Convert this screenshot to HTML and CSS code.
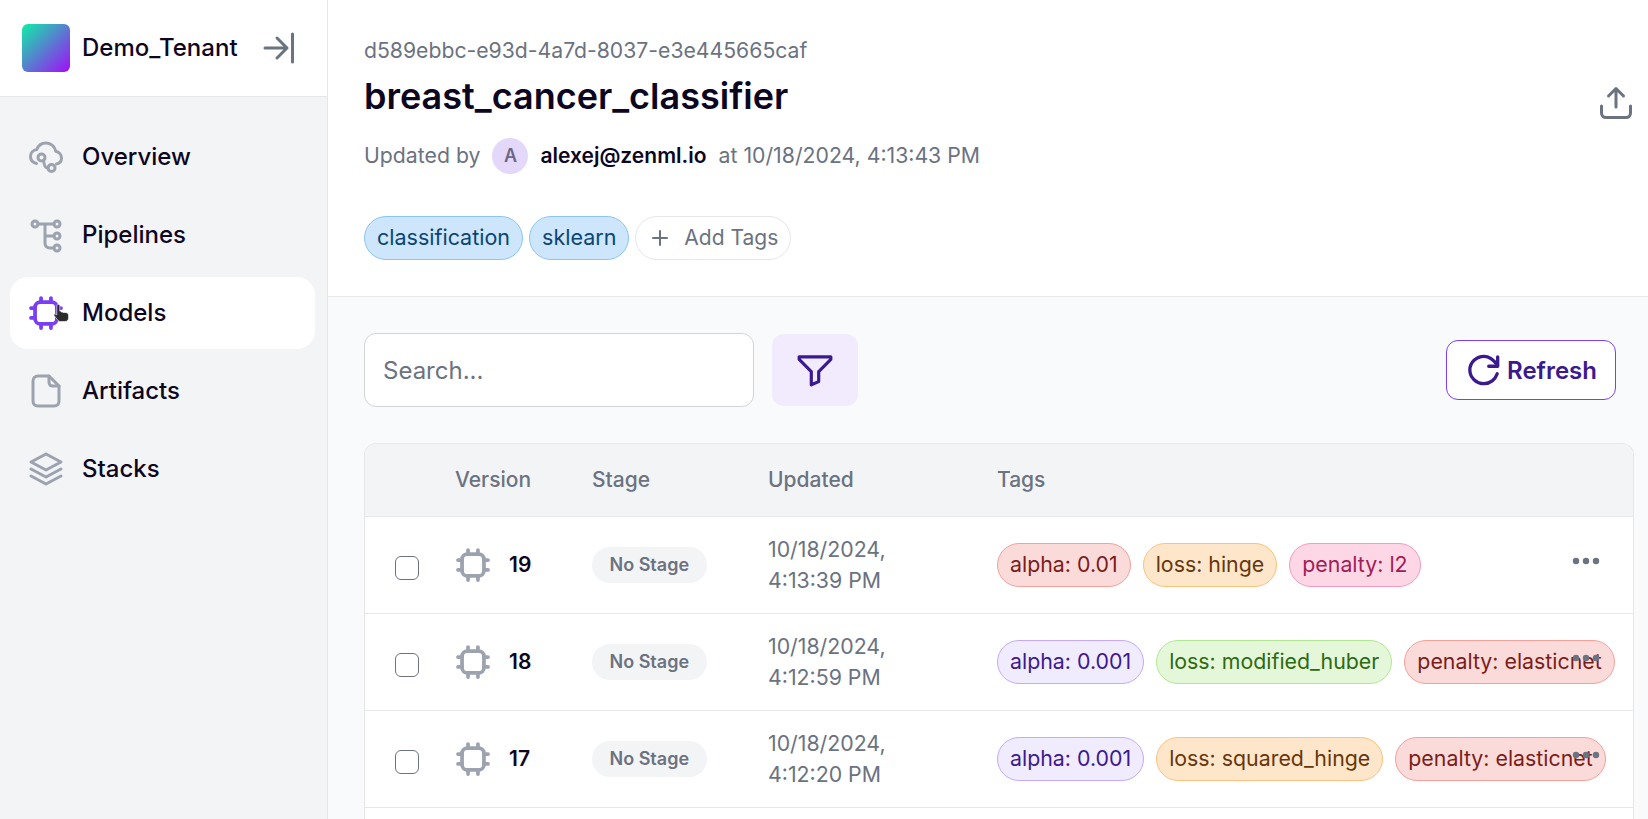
FILE: index.html
```html
<!DOCTYPE html>
<html lang="en">
<head>
    <meta charset="UTF-8">
    <meta name="viewport" content="width=device-width, initial-scale=1.0">
    <title>breast_cancer_classifier</title>
    <link rel="stylesheet" href="styles.css">
</head>
<body>
    <div class="app">
        <!-- Sidebar -->
        <aside class="sidebar">
            <div class="tenant">
                <div class="tenant-logo"></div>
                <span class="tenant-name">Demo_Tenant</span>
                <svg class="collapse-icon" viewBox="0 0 36 36" fill="none" stroke="currentColor" stroke-width="3" stroke-linecap="round" stroke-linejoin="round">
                    <path d="M4 18h22M16 8l10 10-10 10"/>
                    <path d="M31.500 4v28"/>
                </svg>
            </div>
            <nav class="nav">
                <a class="nav-item">
                    <svg class="nav-icon" viewBox="0 0 36 36" fill="none" stroke="currentColor" stroke-width="3" stroke-linecap="round" stroke-linejoin="round">
                        <path d="M8.500 24.500C4.800 23.600 2.500 20.800 2.500 17.500C2.500 13.800 5.300 11 8.800 10.500C10.300 6.500 14 4 18 4C23 4 27 7.600 27.700 12.300C31 13 33.500 15.700 33.500 19C33.500 22 31.500 24.500 28.500 25"/>
                        <circle cx="13.500" cy="18.500" r="3.500"/>
                        <circle cx="23.500" cy="29" r="3.500"/>
                        <path d="M15.500 21.500L16.500 26C17 28 18 29 20 29"/>
                    </svg>
                    <span>Overview</span>
                </a>
                <a class="nav-item">
                    <svg class="nav-icon" viewBox="0 0 36 36" fill="none" stroke="currentColor" stroke-width="3" stroke-linecap="round" stroke-linejoin="round">
                        <circle cx="7" cy="7" r="3"/>
                        <circle cx="29" cy="7" r="3"/>
                        <circle cx="29" cy="19" r="3"/>
                        <circle cx="29" cy="31" r="3"/>
                        <path d="M10 7h16M17 7v19c0 3 2 5 5 5h4M17 19h9"/>
                    </svg>
                    <span>Pipelines</span>
                </a>
                <a class="nav-item active">
                    <svg class="nav-icon" viewBox="0 0 24 24" fill="none" stroke="currentColor" stroke-width="2.500" stroke-linecap="round">
                        <rect x="4.700" y="4.700" width="14.600" height="14.600" rx="3.500"/>
                        <path d="M8.700 2v2.700M15.300 2v2.700M8.700 19.300V22M15.300 19.300V22M2 8.700h2.700M2 15.300h2.700M19.300 8.700H22M19.300 15.300H22"/>
                    </svg>
                    <span>Models</span>
                    <!-- Mouse pointer caught in the picture -->
                    <svg class="pointer" viewBox="0 0 16 18">
                        <path d="M3.800 1.500c0-1.500 3-1.500 3 0V7H8v1h2v.5h2c2 0 3.500 1 3.500 2.500v3c0 2.300-1.500 3.500-3.500 3.500H7.500c-1.500 0-2.300-.7-3-1.800L1 11.500c-.6-1 .8-2 1.800-1.200l1 .7z" fill="#2b2b2b" stroke="#ffffff" stroke-width=".6"/>
                    </svg>
                </a>
                <a class="nav-item">
                    <svg class="nav-icon" viewBox="0 0 36 36" fill="none" stroke="currentColor" stroke-width="3" stroke-linecap="round" stroke-linejoin="round">
                        <path d="M21 3H10C7 3 5 5 5 8v20c0 3 2 5 5 5h16c3 0 5-2 5-5V13z"/>
                        <path d="M21 3v6c0 2.500 1.500 4 4 4h6"/>
                    </svg>
                    <span>Artifacts</span>
                </a>
                <a class="nav-item">
                    <svg class="nav-icon" viewBox="0 0 36 36" fill="none" stroke="currentColor" stroke-width="3" stroke-linecap="round" stroke-linejoin="round">
                        <path d="M18 3L33 11 18 19 3 11z"/>
                        <path d="M3 18l15 8 15-8"/>
                        <path d="M3 25l15 8 15-8"/>
                    </svg>
                    <span>Stacks</span>
                </a>
            </nav>
        </aside>

        <main class="main">
            <!-- Page header -->
            <header class="page-header">
                <div class="page-info">
                    <div class="model-id">d589ebbc-e93d-4a7d-8037-e3e445665caf</div>
                    <h1 class="model-name">breast_cancer_classifier</h1>
                    <div class="updated-by">
                        <span>Updated by</span>
                        <span class="avatar">A</span>
                        <span class="email">alexej@zenml.io</span>
                        <span>at 10/18/2024, 4:13:43 PM</span>
                    </div>
                    <div class="header-tags">
                        <span class="tag tag-blue">classification</span>
                        <span class="tag tag-blue">sklearn</span>
                        <span class="tag tag-add">
                            <svg class="plus-icon" viewBox="0 0 18 18" fill="none" stroke="currentColor" stroke-width="2" stroke-linecap="round">
                                <path d="M9 2v14M2 9h14"/>
                            </svg>
                            Add Tags
                        </span>
                    </div>
                </div>
                <svg class="share-icon" viewBox="0 0 36 36" fill="none" stroke="currentColor" stroke-width="3" stroke-linecap="round" stroke-linejoin="round">
                    <path d="M18 22V4M10.500 11L18 3.500 25.500 11"/>
                    <path d="M3.500 21v7c0 2.800 2 4.500 4.500 4.500h20c2.500 0 4.500-1.700 4.500-4.500v-7"/>
                </svg>
            </header>

            <section class="content">
                <!-- Search and actions -->
                <div class="toolbar">
                    <input class="search" type="text" placeholder="Search...">
                    <button class="filter-btn">
                        <svg class="filter-icon" viewBox="0 0 36 36" fill="none" stroke="currentColor" stroke-width="3" stroke-linejoin="round">
                            <path d="M3 5.500h30v2.500L21.500 19.500V29L14.500 32V19.500L3 8z"/>
                        </svg>
                    </button>
                    <button class="refresh-btn">
                        <svg class="refresh-icon" viewBox="0 0 36 36" fill="none" stroke="currentColor" stroke-width="3.500" stroke-linecap="round" stroke-linejoin="round">
                            <path d="M32 22c-2 6-7.500 10.500-14 10.500C10 32.500 3 26 3 18S10 3.500 18 3.500c6 0 10 3.500 14 9"/>
                            <path d="M32.500 4v10H23"/>
                        </svg>
                        Refresh
                    </button>
                </div>

                <!-- Versions table -->
                <div class="table">
                    <div class="table-head">
                        <span class="col-check"></span>
                        <span class="col-version">Version</span>
                        <span class="col-stage">Stage</span>
                        <span class="col-updated">Updated</span>
                        <span class="col-tags">Tags</span>
                    </div>

                    <div class="table-row">
                        <span class="col-check"><input class="checkbox" type="checkbox"></span>
                        <span class="col-version">
                            <svg class="chip-icon" viewBox="0 0 24 24" fill="none" stroke="currentColor" stroke-width="2.500" stroke-linecap="round">
                                <rect x="4.700" y="4.700" width="14.600" height="14.600" rx="3.500"/>
                                <path d="M8.700 2v2.700M15.300 2v2.700M8.700 19.300V22M15.300 19.300V22M2 8.700h2.700M2 15.300h2.700M19.300 8.700H22M19.300 15.300H22"/>
                            </svg>
                            <span class="version-num">19</span>
                        </span>
                        <span class="col-stage"><span class="stage-pill">No Stage</span></span>
                        <span class="col-updated">10/18/2024,<br>4:13:39 PM</span>
                        <span class="col-tags">
                            <span class="tag tag-red">alpha: 0.01</span>
                            <span class="tag tag-orange">loss: hinge</span>
                            <span class="tag tag-pink">penalty: l2</span>
                        </span>
                        <svg class="row-menu" viewBox="0 0 36 8" fill="currentColor">
                            <circle cx="8" cy="4" r="3.200"/><circle cx="18" cy="4" r="3.200"/><circle cx="28" cy="4" r="3.200"/>
                        </svg>
                    </div>

                    <div class="table-row">
                        <span class="col-check"><input class="checkbox" type="checkbox"></span>
                        <span class="col-version">
                            <svg class="chip-icon" viewBox="0 0 24 24" fill="none" stroke="currentColor" stroke-width="2.500" stroke-linecap="round">
                                <rect x="4.700" y="4.700" width="14.600" height="14.600" rx="3.500"/>
                                <path d="M8.700 2v2.700M15.300 2v2.700M8.700 19.300V22M15.300 19.300V22M2 8.700h2.700M2 15.300h2.700M19.300 8.700H22M19.300 15.300H22"/>
                            </svg>
                            <span class="version-num">18</span>
                        </span>
                        <span class="col-stage"><span class="stage-pill">No Stage</span></span>
                        <span class="col-updated">10/18/2024,<br>4:12:59 PM</span>
                        <span class="col-tags">
                            <span class="tag tag-purple">alpha: 0.001</span>
                            <span class="tag tag-green">loss: modified_huber</span>
                            <span class="tag tag-red">penalty: elasticnet</span>
                        </span>
                        <svg class="row-menu" viewBox="0 0 36 8" fill="currentColor">
                            <circle cx="8" cy="4" r="3.200"/><circle cx="18" cy="4" r="3.200"/><circle cx="28" cy="4" r="3.200"/>
                        </svg>
                    </div>

                    <div class="table-row">
                        <span class="col-check"><input class="checkbox" type="checkbox"></span>
                        <span class="col-version">
                            <svg class="chip-icon" viewBox="0 0 24 24" fill="none" stroke="currentColor" stroke-width="2.500" stroke-linecap="round">
                                <rect x="4.700" y="4.700" width="14.600" height="14.600" rx="3.500"/>
                                <path d="M8.700 2v2.700M15.300 2v2.700M8.700 19.300V22M15.300 19.300V22M2 8.700h2.700M2 15.300h2.700M19.300 8.700H22M19.300 15.300H22"/>
                            </svg>
                            <span class="version-num">17</span>
                        </span>
                        <span class="col-stage"><span class="stage-pill">No Stage</span></span>
                        <span class="col-updated">10/18/2024,<br>4:12:20 PM</span>
                        <span class="col-tags">
                            <span class="tag tag-purple">alpha: 0.001</span>
                            <span class="tag tag-orange">loss: squared_hinge</span>
                            <span class="tag tag-red">penalty: elasticnet</span>
                        </span>
                        <svg class="row-menu" viewBox="0 0 36 8" fill="currentColor">
                            <circle cx="8" cy="4" r="3.200"/><circle cx="18" cy="4" r="3.200"/><circle cx="28" cy="4" r="3.200"/>
                        </svg>
                    </div>

                    <!-- Next row is cut off by the window -->
                    <div class="table-row"></div>
                </div>
            </section>
        </main>
    </div>
</body>
</html>
```

FILE: styles.css
```css
* {
    box-sizing: border-box;
}

html, body {
    height: 100%;
    margin: 0;
    overflow: hidden;
}

body {
    font-family: Inter, "Noto Sans", sans-serif;
    font-size: 21px;
    line-height: 31.5px;
    color: #0d061f;
    background-color: #ffffff;
}

.app {
    display: flex;
    height: 100%;
}

/* Sidebar */
.sidebar {
    flex: 0 0 328px;
    background-color: #f3f4f6;
    border-right: 1px solid #e5e7eb;
}

.tenant {
    display: flex;
    align-items: center;
    height: 97px;
    padding-left: 22px;
    background-color: #ffffff;
    border-bottom: 1px solid #e5e7eb;
}

.tenant-logo {
    width: 48px;
    height: 48px;
    border-radius: 6px;
    background: linear-gradient(135deg, #0fefa6, #a20cf8);
}

.tenant-name {
    margin-left: 12px;
    font-size: 24px;
    font-weight: 500;
}

.collapse-icon {
    width: 36px;
    height: 36px;
    margin-left: 23px;
    color: #6b7280;
}

.nav {
    display: flex;
    flex-direction: column;
    gap: 6px;
    padding: 24px 12px 0 10px;
}

.nav-item {
    position: relative;
    display: flex;
    align-items: center;
    gap: 18px;
    height: 72px;
    padding-left: 18px;
    border-radius: 18px;
    font-size: 24px;
    font-weight: 500;
}

.nav-item.active {
    background-color: #ffffff;
}

.nav-icon {
    width: 36px;
    height: 36px;
    color: #9ca3af;
}

.nav-item.active .nav-icon {
    color: #7a3ef4;
}

.pointer {
    position: absolute;
    left: 43px;
    top: 27px;
    width: 16px;
    height: 18px;
}

/* Main column */
.main {
    flex: 1;
    min-width: 0;
    display: flex;
    flex-direction: column;
    background-color: #f9fafb;
}

.page-header {
    flex: 0 0 297px;
    display: flex;
    justify-content: space-between;
    padding: 35px 15px 0 36px;
    background-color: #ffffff;
    border-bottom: 1px solid #e5e7eb;
}

.model-id {
    color: #6b7280;
    font-size: 21.2px;
}

.model-name {
    margin: 2px 0 0;
    font-size: 36px;
    line-height: 54px;
    font-weight: 600;
}

.updated-by {
    display: flex;
    align-items: center;
    gap: 12px;
    margin-top: 15px;
    color: #6b7280;
    font-size: 21.25px;
}

.avatar {
    display: flex;
    align-items: center;
    justify-content: center;
    width: 36px;
    height: 36px;
    border-radius: 50%;
    background-color: #e4d8fa;
    color: #6f6685;
    font-size: 18px;
    font-weight: 600;
}

.email {
    color: #0d061f;
    font-size: 21px;
    font-weight: 600;
}

.header-tags {
    display: flex;
    gap: 6px;
    margin-top: 42px;
}

.share-icon {
    width: 36px;
    height: 36px;
    margin-top: 50px;
    margin-right: -1px;
    color: #6b7280;
}

/* Tags */
.tag {
    display: inline-flex;
    align-items: center;
    height: 44px;
    padding: 0 12px;
    border: 1px solid;
    border-radius: 22px;
    font-size: 21.35px;
    white-space: nowrap;
}

.header-tags .tag-blue {
    font-size: 21.5px;
}

.tag-blue {
    background-color: #cde6fc;
    border-color: #8cc5f5;
    color: #0b4475;
}

.tag-add {
    gap: 15px;
    padding: 0 12px 0 15px;
    background-color: #ffffff;
    border-color: #e5e7eb;
    color: #6b7280;
    font-size: 21px;
}

.plus-icon {
    width: 18px;
    height: 18px;
}

.tag-red {
    background-color: #fadbd9;
    border-color: #f4a19b;
    color: #7a1d1a;
}

.tag-orange {
    background-color: #fee6cb;
    border-color: #fbc27d;
    color: #67360a;
}

.tag-pink {
    background-color: #fdd7e5;
    border-color: #f79ac0;
    color: #a11d56;
}

.tag-purple {
    background-color: #f1ebfe;
    border-color: #c5aafa;
    color: #3c1a8e;
}

.tag-green {
    background-color: #e4f7d8;
    border-color: #b3e893;
    color: #2f6a12;
}

/* Search and actions */
.content {
    padding: 36px 14px 0 36px;
}

.toolbar {
    display: flex;
    align-items: center;
    padding-right: 18px;
}

.search {
    width: 390px;
    height: 74px;
    padding: 0 18px;
    border: 1px solid #d1d5db;
    border-radius: 12px;
    background-color: #ffffff;
    font-family: inherit;
    font-size: 24px;
    color: #0d061f;
}

.search::placeholder {
    color: #6b7280;
    opacity: 1;
}

.filter-btn {
    display: flex;
    align-items: center;
    justify-content: center;
    width: 86px;
    height: 72px;
    margin-left: 18px;
    border: none;
    border-radius: 12px;
    background-color: #f1ebfd;
    color: #3b1a8f;
}

.filter-icon {
    width: 38px;
    height: 38px;
}

.refresh-btn {
    display: flex;
    align-items: center;
    gap: 6px;
    height: 60px;
    margin-left: auto;
    padding: 0 18px 0 20px;
    border: 1px solid #7a3ef4;
    border-radius: 12px;
    background-color: #ffffff;
    font-family: inherit;
    font-size: 24px;
    font-weight: 600;
    color: #3b1a8f;
}

.refresh-icon {
    width: 34px;
    height: 34px;
}

/* Versions table */
.table {
    margin-top: 36px;
    background-color: #ffffff;
    border: 1px solid #e5e7eb;
    border-bottom: none;
    border-radius: 12px 12px 0 0;
    overflow: hidden;
}

.table-head,
.table-row {
    display: flex;
    align-items: center;
    border-bottom: 1px solid #e5e7eb;
}

.table-head {
    height: 73px;
    background-color: #f3f4f6;
    font-weight: 500;
    color: #6b7280;
}

.table-row {
    position: relative;
    height: 97px;
}

.col-check {
    flex: 0 0 90px;
    padding-left: 30px;
}

.col-version {
    flex: 0 0 137px;
    display: flex;
    align-items: center;
    gap: 18px;
}

.col-stage {
    flex: 0 0 176px;
}

.col-updated {
    flex: 0 0 229px;
    color: #6b7280;
    font-size: 21.3px;
}

.table-head .col-updated {
    font-size: 21px;
}

.col-tags {
    display: flex;
    gap: 12px;
}

.checkbox {
    display: block;
    appearance: none;
    width: 24px;
    height: 24px;
    margin: 5px 0 0;
    border: 1px solid #6b7280;
    border-radius: 6px;
    background-color: #ffffff;
}

.chip-icon {
    width: 36px;
    height: 36px;
    color: #9ca3af;
}

.version-num {
    font-weight: 600;
}

.stage-pill {
    display: inline-flex;
    align-items: center;
    height: 36px;
    padding: 0 17.5px;
    border-radius: 18px;
    background-color: #f3f4f6;
    color: #6b7280;
    font-size: 18px;
    font-weight: 600;
}

/* Row menu sits on top of the tag cell */
.row-menu {
    position: absolute;
    right: 29px;
    top: 40px;
    width: 36px;
    height: 8px;
    color: #6b7280;
}
```
